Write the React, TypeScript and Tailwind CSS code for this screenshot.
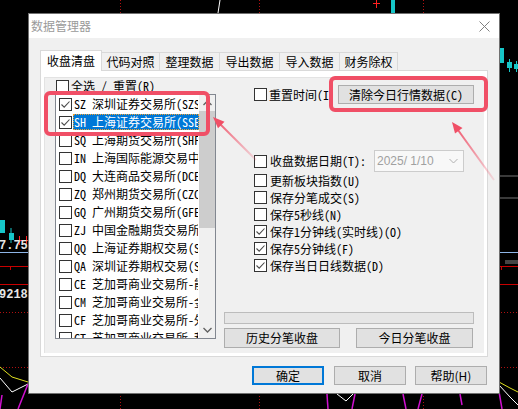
import React from "react";

const MONO = "font-['Noto_Sans_Mono_CJK_SC','Noto_Sans_CJK_SC',monospace]";
const UI = "font-['Noto_Sans_CJK_SC',sans-serif]";

function Box({ checked }: { checked?: boolean }) {
  return (
    <span className="flex h-[13px] w-[13px] shrink-0 items-center justify-center border border-[#333333] bg-white">
      {checked && (
        <svg width="11" height="11" viewBox="0 0 11 11">
          <path d="M1.5 5.5 L4.2 8.2 L9.5 2.5" fill="none" stroke="#4a4a4a" strokeWidth="1.1" />
        </svg>
      )}
    </span>
  );
}

const items: { code: string; name: string; checked?: boolean; sel?: boolean }[] = [
  { code: "SZ", name: "深圳证券交易所(SZSE)", checked: true },
  { code: "SH", name: "上海证券交易所(SSE)", checked: true, sel: true },
  { code: "SQ", name: "上海期货交易所(SHFE)" },
  { code: "IN", name: "上海国际能源交易中心" },
  { code: "DQ", name: "大连商品交易所(DCE)" },
  { code: "ZQ", name: "郑州期货交易所(CZCE)" },
  { code: "GQ", name: "广州期货交易所(GFEX)" },
  { code: "ZJ", name: "中国金融期货交易所" },
  { code: "QQ", name: "上海证券期权交易(SSE)" },
  { code: "QA", name: "深圳证券期权交易(SZSE)" },
  { code: "CE", name: "芝加哥商业交易所-能源" },
  { code: "CM", name: "芝加哥商业交易所-金属" },
  { code: "CF", name: "芝加哥商业交易所-外汇" },
  { code: "CT", name: "芝加哥商业交易所-利率" },
];

const opts: { label: string; checked?: boolean }[] = [
  { label: "更新板块指数(U)" },
  { label: "保存分笔成交(S)" },
  { label: "保存5秒线(N)" },
  { label: "保存1分钟线(实时线)(O)", checked: true },
  { label: "保存5分钟线(F)", checked: true },
  { label: "保存当日日线数据(D)", checked: true },
];

function Chart() {
  const cyan = "#16c6c8";
  const red = "#c80000";
  const mag = "#d010d0";
  return (
    <svg className="absolute left-0 top-0" width="518" height="409">
      {/* dotted verticals */}
      {[120.5, 259.5, 423.5].map((x) => (
        <line key={x} x1={x} y1="0" x2={x} y2="409" stroke="#b01010" strokeDasharray="1 2" />
      ))}
      {/* top items */}
      <line x1="220" y1="0" x2="218" y2="13" stroke="#ffffff" strokeWidth="1" />
      <line x1="376.5" y1="0" x2="376.5" y2="8" stroke="#ff2020" />
      <line x1="373" y1="3.5" x2="380" y2="3.5" stroke="#ff2020" />
      <rect x="391" y="0" width="4" height="13" fill={cyan} />
      {/* right candles */}
      <rect x="500" y="48" width="4" height="15" fill={cyan} />
      <line x1="509.5" y1="59" x2="509.5" y2="72" stroke={cyan} />
      <rect x="507" y="62" width="5" height="6" fill={cyan} />
      <line x1="516.5" y1="61" x2="516.5" y2="72" stroke={cyan} />
      <rect x="514" y="64" width="5" height="5" fill={cyan} />
      {/* right grey lines */}
      <rect x="499" y="175" width="19" height="2" fill="#3a3a3a" />
      <rect x="499" y="197" width="19" height="2" fill="#3a3a3a" />
      <rect x="505" y="260" width="13" height="4" fill="#444444" />
      {/* left candles */}
      <rect x="0" y="220" width="5" height="13" fill={cyan} />
      <line x1="11" y1="228" x2="11" y2="243" stroke={cyan} />
      <rect x="9" y="233" width="5" height="7" fill={cyan} />
      <line x1="19.5" y1="236" x2="19.5" y2="245" stroke="#ff2020" />
      <line x1="16" y1="240.5" x2="23" y2="240.5" stroke="#ff2020" />
      <line x1="26.5" y1="236" x2="26.5" y2="245" stroke="#ff2020" />
      <line x1="24" y1="240.5" x2="28" y2="240.5" stroke="#ff2020" />
      {/* horizontal lines */}
      <line x1="0" y1="252.5" x2="518" y2="252.5" stroke="#8db4e6" />
      <line x1="0" y1="266.5" x2="518" y2="266.5" stroke={red} />
      <line x1="10.5" y1="266" x2="10.5" y2="270" stroke={red} />
      <line x1="501.5" y1="266" x2="501.5" y2="270" stroke={red} />
      <line x1="0" y1="284.5" x2="518" y2="284.5" stroke={red} />
      <line x1="0" y1="312.5" x2="518" y2="312.5" stroke="#b01010" strokeDasharray="1 2" />
      <line x1="0" y1="367.5" x2="518" y2="367.5" stroke="#b01010" strokeDasharray="1 2" />
      <text x="-1" y="249" fill="#e6e6e6" fontSize="12" fontWeight="bold" fontFamily="Liberation Mono, monospace">7.75</text>
      <text x="-1" y="298" fill="#e6e6e6" fontSize="12" fontWeight="bold" fontFamily="Liberation Mono, monospace">9218</text>
      {/* bottom curves */}
      <polyline points="0,367 12,377 28,382" fill="none" stroke="#e0e020" />
      <polyline points="0,378 12,392 28,384" fill="none" stroke="#ffffff" />
      <polyline points="499,382 510,388 518,392" fill="none" stroke="#e0e020" />
      <polyline points="499,385 510,397 518,405" fill="none" stroke="#ffffff" />
      <polyline points="337,394 346,401 353,394" fill="none" stroke="#ffffff" />
      <line x1="2" y1="395" x2="0" y2="409" stroke={mag} strokeWidth="1.5" />
      <line x1="28" y1="384" x2="18" y2="409" stroke={mag} strokeWidth="1.5" />
      <line x1="327" y1="394" x2="328" y2="409" stroke={mag} strokeWidth="1.5" />
      <line x1="355" y1="394" x2="352" y2="409" stroke={mag} strokeWidth="1.5" />
      <line x1="403" y1="394" x2="406" y2="409" stroke={mag} strokeWidth="1.5" />
      <line x1="422" y1="394" x2="418" y2="409" stroke={mag} strokeWidth="1.5" />
      <line x1="460" y1="394" x2="462" y2="405" stroke={mag} strokeWidth="1.5" />
      <line x1="497" y1="380" x2="502" y2="409" stroke={mag} strokeWidth="1.5" />
    </svg>
  );
}

function Annotations() {
  const c = "#f04f66";
  return (
    <svg className="pointer-events-none absolute left-0 top-0" width="518" height="409">
      <defs>
        <linearGradient id="g1" gradientUnits="userSpaceOnUse" x1="256" y1="160" x2="213" y2="117">
          <stop offset="0" stopColor={c} stopOpacity="0.15" />
          <stop offset="1" stopColor={c} stopOpacity="1" />
        </linearGradient>
        <linearGradient id="g2" gradientUnits="userSpaceOnUse" x1="494" y1="180" x2="452" y2="122">
          <stop offset="0" stopColor={c} stopOpacity="0.15" />
          <stop offset="1" stopColor={c} stopOpacity="1" />
        </linearGradient>
      </defs>
      <rect x="46" y="93" width="162" height="41" rx="4" fill="none" stroke={c} strokeWidth="4" />
      <rect x="331" y="78" width="155" height="32" rx="4" fill="none" stroke={c} strokeWidth="4" />
      <line x1="256" y1="160" x2="220" y2="124" stroke="url(#g1)" strokeWidth="2" />
      <polygon points="213,117 224.5,121.8 218,128.3" fill={c} />
      <line x1="494" y1="180" x2="458" y2="130" stroke="url(#g2)" strokeWidth="2" />
      <polygon points="452,122 462.5,128 455,133.5" fill={c} />
    </svg>
  );
}

function Btn({ children, className = "", mono = false }: { children: React.ReactNode; className?: string; mono?: boolean }) {
  return (
    <div
      className={`flex h-[20px] items-center justify-center border border-[#adadad] bg-[#e1e1e1] text-[12px] leading-none text-black ${mono ? MONO : UI} ${className}`}
    >
      {children}
    </div>
  );
}

export default function App() {
  const tabs = [
    { t: "代码对照", w: "w-[58px]" },
    { t: "整理数据", w: "w-[60px]" },
    { t: "导出数据", w: "w-[60px]" },
    { t: "导入数据", w: "w-[60px]" },
    { t: "财务除权", w: "w-[58px]" },
  ];
  return (
    <div className="relative h-[409px] w-[518px] overflow-hidden bg-black">
      <Chart />
      <div className="absolute left-[28px] top-[13px] flex h-[381px] w-[472px] flex-col border border-[#707070] bg-[#f0f0f0]">
        {/* title bar */}
        <div className="flex h-[24px] shrink-0 items-center justify-between bg-white pl-[2px] pr-[9px]">
          <span className={`${UI} text-[12px] leading-none text-[#9a9a9a]`}>数据管理器</span>
          <svg width="11" height="11" viewBox="0 0 11 11">
            <path d="M0.5 0.5 L10.5 10.5 M10.5 0.5 L0.5 10.5" stroke="#808080" strokeWidth="1" />
          </svg>
        </div>
        {/* body */}
        <div className="block pl-[11px] pt-[12px]">
          {/* tabs */}
          <div className="flex h-[21px] items-start">
            <div className={`relative z-10 flex h-[21px] w-[62px] items-center justify-center border border-b-0 border-[#d9d9d9] bg-white pb-[1px] text-[12px] text-black ${UI}`}>
              收盘清盘
            </div>
            {tabs.map((tb) => (
              <div
                key={tb.t}
                className={`mt-[2px] flex h-[18px] ${tb.w} items-center justify-center border-r border-t border-[#d9d9d9] bg-[#f0f0f0] text-[12px] text-black ${UI}`}
              >
                {tb.t}
              </div>
            ))}
          </div>
          {/* panel */}
          <div className="-mt-[1px] h-[287px] w-[448px] border border-[#d9d9d9] bg-white pb-[3px] pl-[3px] pr-[3px] pt-[6px]">
            <div className="flex h-full w-full border-l border-t border-[#e3e3e3] bg-[#f0f0f0]">
              {/* left column */}
              <div className="ml-[10px] flex w-[161px] flex-col">
                <div className={`flex h-[16px] items-center pl-[1px] text-[12px] leading-none ${MONO}`}>
                  <Box />
                  <span className="ml-[2px] whitespace-nowrap">全选 / 重置(R)</span>
                </div>
                <div className="flex h-[245px] border border-[#828790] bg-white">
                  <div className="flex flex-1 flex-col overflow-hidden">
                    {items.map((it) => (
                      <div key={it.code} className={`flex h-[18px] shrink-0 items-center pl-[3px] text-[12px] leading-none ${MONO}`}>
                        <Box checked={it.checked} />
                        <span
                          className={`ml-[1px] flex h-[16px] flex-1 items-center overflow-hidden whitespace-nowrap ${
                            it.sel ? "border border-dotted border-[#f0a030] bg-[#0078d7] text-white" : "border border-transparent text-black"
                          }`}
                        >
                          {it.code} {it.name}
                        </span>
                      </div>
                    ))}
                  </div>
                  {/* scrollbar */}
                  <div className="flex w-[16px] flex-col bg-[#f0f0f0]">
                    <div className="flex h-[16px] items-center justify-center">
                      <svg width="9" height="6" viewBox="0 0 9 6">
                        <path d="M0.5 5 L4.5 1 L8.5 5" fill="none" stroke="#606060" strokeWidth="1.3" />
                      </svg>
                    </div>
                    <div className="mx-[0px] h-[117px] bg-[#cdcdcd]" />
                    <div className="flex-1" />
                    <div className="flex h-[16px] items-center justify-center">
                      <svg width="9" height="6" viewBox="0 0 9 6">
                        <path d="M0.5 1 L4.5 5 L8.5 1" fill="none" stroke="#606060" strokeWidth="1.3" />
                      </svg>
                    </div>
                  </div>
                </div>
              </div>
              {/* right column */}
              <div className="ml-[8px] flex w-[250px] flex-col">
                <div className="mt-[7px] flex h-[19px] items-center pl-[30px]">
                  <Box />
                  <span className={`ml-[2px] w-[61px] overflow-hidden whitespace-nowrap text-[12px] leading-none ${MONO}`}>重置时间(I)</span>
                  <Btn mono className="ml-auto w-[136px] !h-[19px]">清除今日行情数据(C)</Btn>
                </div>
                <div className="mt-[46px] flex h-[22px] items-center pl-[30px]">
                  <Box />
                  <span className={`ml-[3px] whitespace-nowrap text-[12px] leading-none ${MONO}`}>收盘数据日期(T):</span>
                  <div className="ml-auto mr-[10px] flex h-[22px] w-[90px] items-center border border-[#cccccc] bg-[#f8f8f8] pl-[2px] pr-[5px]">
                    <span className="font-['Liberation_Sans',sans-serif] text-[12px] leading-none text-[#a0a0a0]">2025/ 1/10</span>
                    <svg className="ml-auto" width="9" height="6" viewBox="0 0 9 6">
                      <path d="M0.5 1 L4.5 5 L8.5 1" fill="none" stroke="#b0b0b0" strokeWidth="1" />
                    </svg>
                  </div>
                </div>
                {opts.map((o) => (
                  <div key={o.label} className="flex h-[17px] items-center pl-[30px]">
                    <Box checked={o.checked} />
                    <span className={`ml-[3px] whitespace-nowrap text-[12px] leading-none ${MONO}`}>{o.label}</span>
                  </div>
                ))}
                <div className="mt-[38px] h-[12px] w-[250px] border border-[#bcbcbc] bg-[#e6e6e6]" />
                <div className="mt-[4px] flex">
                  <Btn className="w-[116px]">历史分笔收盘</Btn>
                  <Btn className="ml-[16px] w-[117px]">今日分笔收盘</Btn>
                </div>
              </div>
            </div>
          </div>
          {/* bottom buttons */}
          <div className="mt-[9px] flex">
            <div className={`ml-[212px] flex h-[19px] w-[72px] items-center justify-center border-2 border-[#0078d7] bg-[#e1e1e1] text-[12px] leading-none ${UI}`}>
              确定
            </div>
            <Btn className="ml-[10px] w-[72px] !h-[19px]">取消</Btn>
            <Btn className="ml-[9px] w-[72px] !h-[19px]">帮助(H)</Btn>
          </div>
        </div>
      </div>
      <Annotations />
    </div>
  );
}
